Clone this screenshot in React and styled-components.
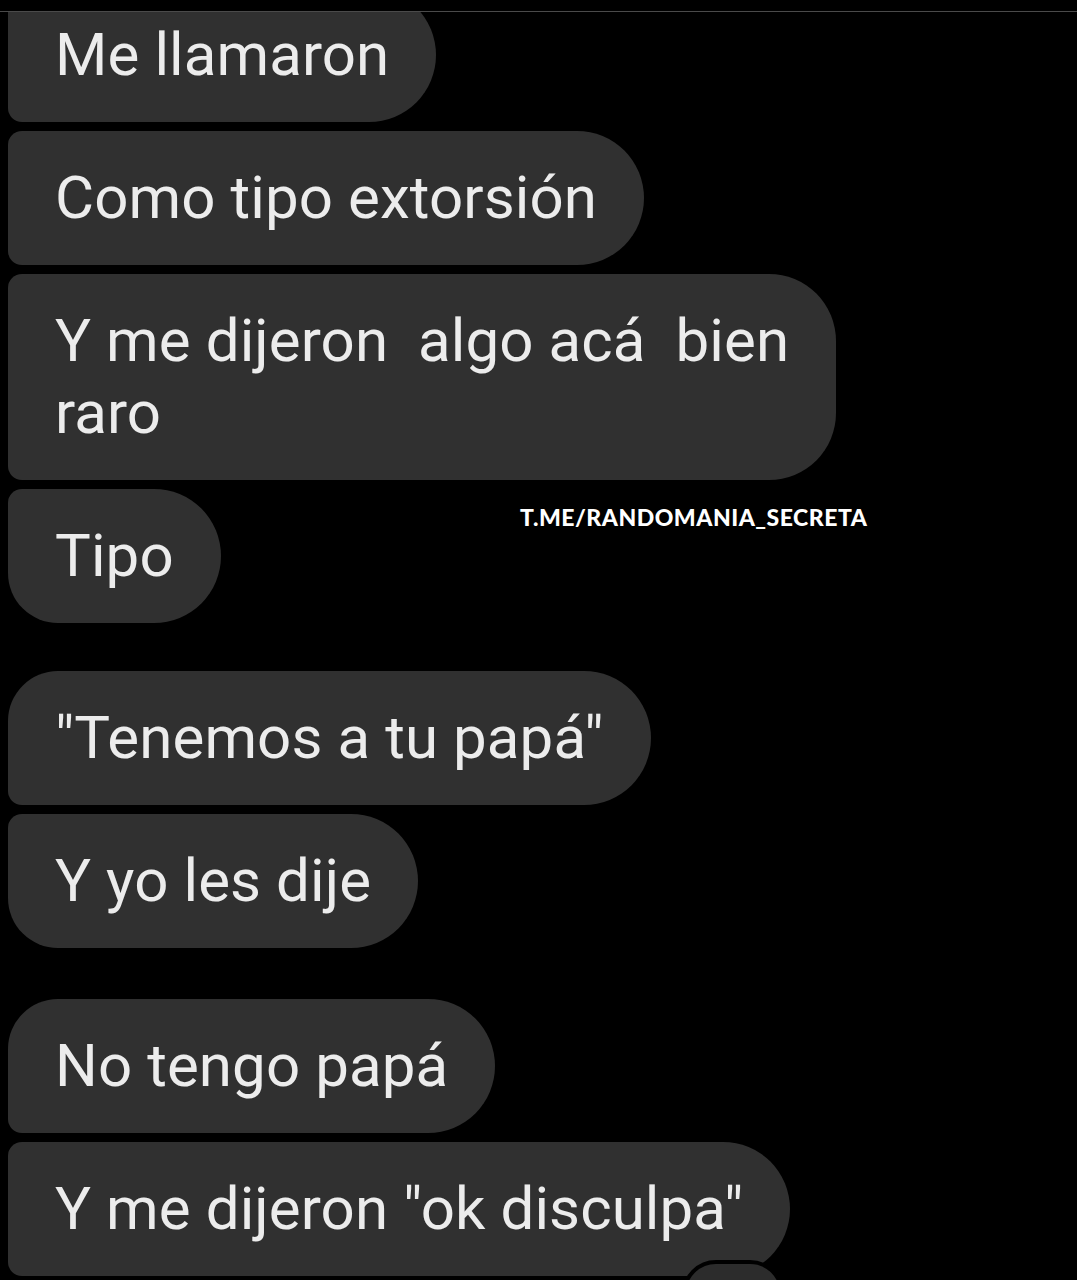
import React from "react";
import styled, { createGlobalStyle } from "styled-components";

const Global = createGlobalStyle`
  html, body {
    margin: 0;
    padding: 0;
    background: #000;
  }
  body {
    font-family: Roboto, "Noto Sans", "Liberation Sans", sans-serif;
  }
`;

const Screen = styled.div`
  position: relative;
  width: 1077px;
  height: 1280px;
  background: #000;
  overflow: hidden;
`;

const TopRule = styled.div`
  height: 11px;
  border-bottom: 1px solid #4a4a4a;
`;

const Thread = styled.div`
  display: flex;
  flex-direction: column;
  align-items: flex-start;
  padding: 0 0 40px 8px;
  overflow: hidden;
`;

const Group = styled.div`
  display: flex;
  flex-direction: column;
  align-items: flex-start;
  gap: 9px;
  margin-top: ${(p) => p.$space || 0}px;
`;

const Bubble = styled.div`
  position: relative;
  box-sizing: border-box;
  background: #303030;
  color: #ececec;
  font-size: 60px;
  line-height: 72px;
  letter-spacing: 0.1px;
  white-space: pre-wrap;
  padding: 31px 47px;
  border-radius: ${(p) => (p.$first ? 50 : 14)}px 67px 67px
    ${(p) => (p.$last ? 50 : 14)}px;
  margin-top: ${(p) => p.$lift || 0}px;
`;

const Reaction = styled.div`
  position: absolute;
  right: 6px;
  bottom: -52px;
  width: 94px;
  height: 60px;
  border-radius: 40px;
  background: #2c2c2c;
  border: 4px solid #000;
`;

const Watermark = styled.div`
  position: absolute;
  left: 520px;
  top: 503px;
  font-family: Lato, "Open Sans", sans-serif;
  font-weight: 900;
  font-size: 23px;
  letter-spacing: 0.5px;
  color: #fff;
  white-space: nowrap;
`;

export default function App() {
  return (
    <Screen>
      <Global />
      <TopRule />
      <Thread>
        <Group>
          <Bubble $lift={-24}>Me llamaron</Bubble>
          <Bubble>Como tipo extorsión</Bubble>
          <Bubble>{"Y me dijeron  algo acá  bien\nraro"}</Bubble>
          <Bubble $last>Tipo</Bubble>
        </Group>
        <Group $space={48}>
          <Bubble $first>"Tenemos a tu papá"</Bubble>
          <Bubble $last>Y yo les dije</Bubble>
        </Group>
        <Group $space={51}>
          <Bubble $first>No tengo papá</Bubble>
          <Bubble>
            Y me dijeron "ok disculpa"
            <Reaction />
          </Bubble>
        </Group>
      </Thread>
      <Watermark>T.ME/RANDOMANIA_SECRETA</Watermark>
    </Screen>
  );
}
